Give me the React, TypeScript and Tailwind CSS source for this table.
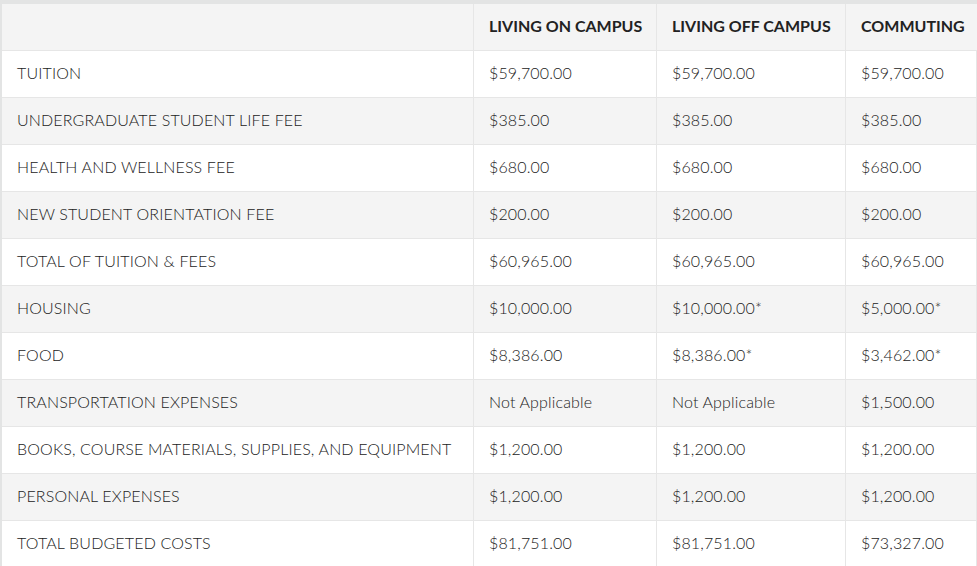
const rows: Array<[string, string, string, string]> = [
  ["TUITION", "$59,700.00", "$59,700.00", "$59,700.00"],
  ["UNDERGRADUATE STUDENT LIFE FEE", "$385.00", "$385.00", "$385.00"],
  ["HEALTH AND WELLNESS FEE", "$680.00", "$680.00", "$680.00"],
  ["NEW STUDENT ORIENTATION FEE", "$200.00", "$200.00", "$200.00"],
  ["TOTAL OF TUITION & FEES", "$60,965.00", "$60,965.00", "$60,965.00"],
  ["HOUSING", "$10,000.00", "$10,000.00*", "$5,000.00*"],
  ["FOOD", "$8,386.00", "$8,386.00*", "$3,462.00*"],
  ["TRANSPORTATION EXPENSES", "Not Applicable", "Not Applicable", "$1,500.00"],
  ["BOOKS, COURSE MATERIALS, SUPPLIES, AND EQUIPMENT", "$1,200.00", "$1,200.00", "$1,200.00"],
  ["PERSONAL EXPENSES", "$1,200.00", "$1,200.00", "$1,200.00"],
  ["TOTAL BUDGETED COSTS", "$81,751.00", "$81,751.00", "$73,327.00"],
];

const headers = ["", "LIVING ON CAMPUS", "LIVING OFF CAMPUS", "COMMUTING"];

const gridCols = "grid grid-cols-[472px_183px_189px_1fr]";

export default function App() {
  return (
    <div className="w-[977px] h-[566px] overflow-hidden bg-white font-['Lato',sans-serif] text-[16px] text-[#222]">
      <div className="border-t-4 border-l-2 border-[#e3e4e4]">
        {/* header */}
        <div className={`${gridCols} h-[47px] bg-[#f4f4f4] border-b border-[#e6e6e6]`}>
          {headers.map((h, i) => (
            <div
              key={i}
              className="flex items-center px-[15px] pb-[2px] border-r border-[#e6e6e6] font-bold text-[#222] whitespace-nowrap"
            >
              {h}
            </div>
          ))}
        </div>

        {rows.map((row, r) => (
          <div
            key={r}
            className={`${gridCols} h-[47px] border-b border-[#e6e6e6] ${r % 2 === 1 ? "bg-[#f4f4f4]" : "bg-white"}`}
          >
            {row.map((cell, i) => (
              <div
                key={i}
                className="flex items-center px-[15px] pb-[2px] border-r border-[#e6e6e6] whitespace-nowrap font-light tracking-[0.15px]"
              >
                {cell}
              </div>
            ))}
          </div>
        ))}
      </div>
    </div>
  );
}
